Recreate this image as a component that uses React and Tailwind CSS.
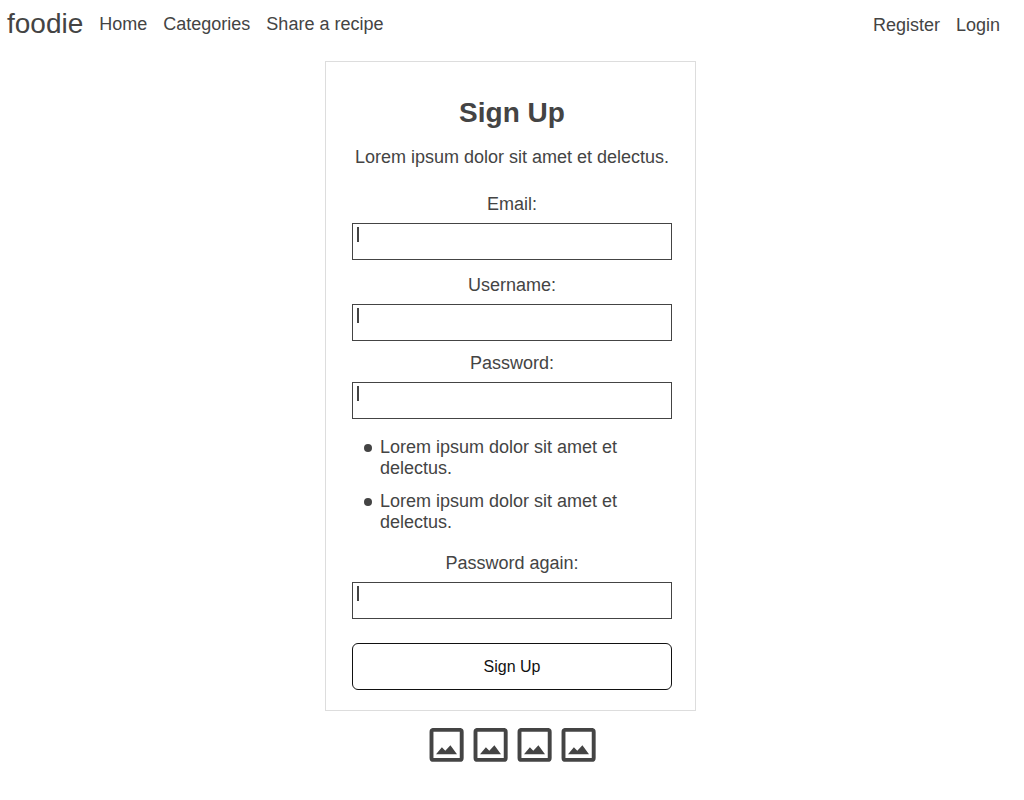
const socialLinks = ["Facebook", "Instagram", "Twitter", "YouTube"];

function PictureIcon() {
  return (
    <svg viewBox="0 0 35 35" className="block size-[35px]" aria-hidden="true">
      <rect x="2.5" y="1.9" width="30.2" height="30" rx="2" fill="none" stroke="#444444" strokeWidth="3.9" />
      <path d="M7 26.3 L12.9 19.2 L16.3 22.8 L21.4 17.3 L28 26.3 Z" fill="#444444" />
    </svg>
  );
}

function Field({ id, label, type, className }) {
  return (
    <div className={className}>
      <label htmlFor={id} className="mb-2 block text-center">
        {label}
      </label>
      <div className="relative">
        <input
          id={id}
          name={id}
          type={type}
          className="block h-[37px] w-full border border-[#444444] bg-white px-1 outline-none"
        />
        <span aria-hidden="true" className="pointer-events-none absolute top-1 left-[5px] h-[15px] w-0.5 bg-[#444444]" />
      </div>
    </div>
  );
}

export default function App() {
  return (
    <div className="bg-white font-['Liberation_Sans',Arial,sans-serif] text-[18px] leading-[21px] text-[#444444]">
      <header className="flex items-center justify-between pt-2 pr-6 pl-[7px]">
        <nav className="flex items-center gap-4">
          <a href="#" className="text-[28px] leading-8">foodie</a>
          <a href="#">Home</a>
          <a href="#">Categories</a>
          <a href="#">Share a recipe</a>
        </nav>
        <nav className="flex items-center gap-4 pt-0.5">
          <a href="#">Register</a>
          <a href="#">Login</a>
        </nav>
      </header>
      <main className="mt-[21px] pr-[3px]">
        <form className="mx-auto w-full max-w-[371px] border border-[#dddddd] pt-[35px] pr-[23px] pb-5 pl-[26px]" onSubmit={(e) => e.preventDefault()}>
          <h1 className="text-center text-[28px] leading-8 font-bold">Sign Up</h1>
          <p className="mt-[18px] text-center">Lorem ipsum dolor sit amet et delectus.</p>
          <Field id="email" label="Email:" type="email" className="mt-[26px]" />
          <Field id="username" label="Username:" type="text" className="mt-[15px]" />
          <Field id="password" label="Password:" type="password" className="mt-3" />
          <ul className="mt-[18px] flex flex-col gap-3 pr-6 pl-3">
            {[1, 2].map((n) => (
              <li key={n} className="flex gap-2">
                <span aria-hidden="true" className="mt-[7px] size-2 shrink-0 rounded-full bg-[#444444]" />
                <span>Lorem ipsum dolor sit amet et delectus.</span>
              </li>
            ))}
          </ul>
          <Field id="password-again" label="Password again:" type="password" className="mt-5" />
          <button type="submit" className="mt-6 block h-[47px] w-full rounded-md border border-[#111111] bg-white text-base text-[#111111]">
            Sign Up
          </button>
        </form>
      </main>
      <footer className="mt-[17px] flex justify-center gap-[9px] pb-6">
        {socialLinks.map((name) => (
          <a key={name} href="#" aria-label={name}>
            <PictureIcon />
          </a>
        ))}
      </footer>
    </div>
  );
}
